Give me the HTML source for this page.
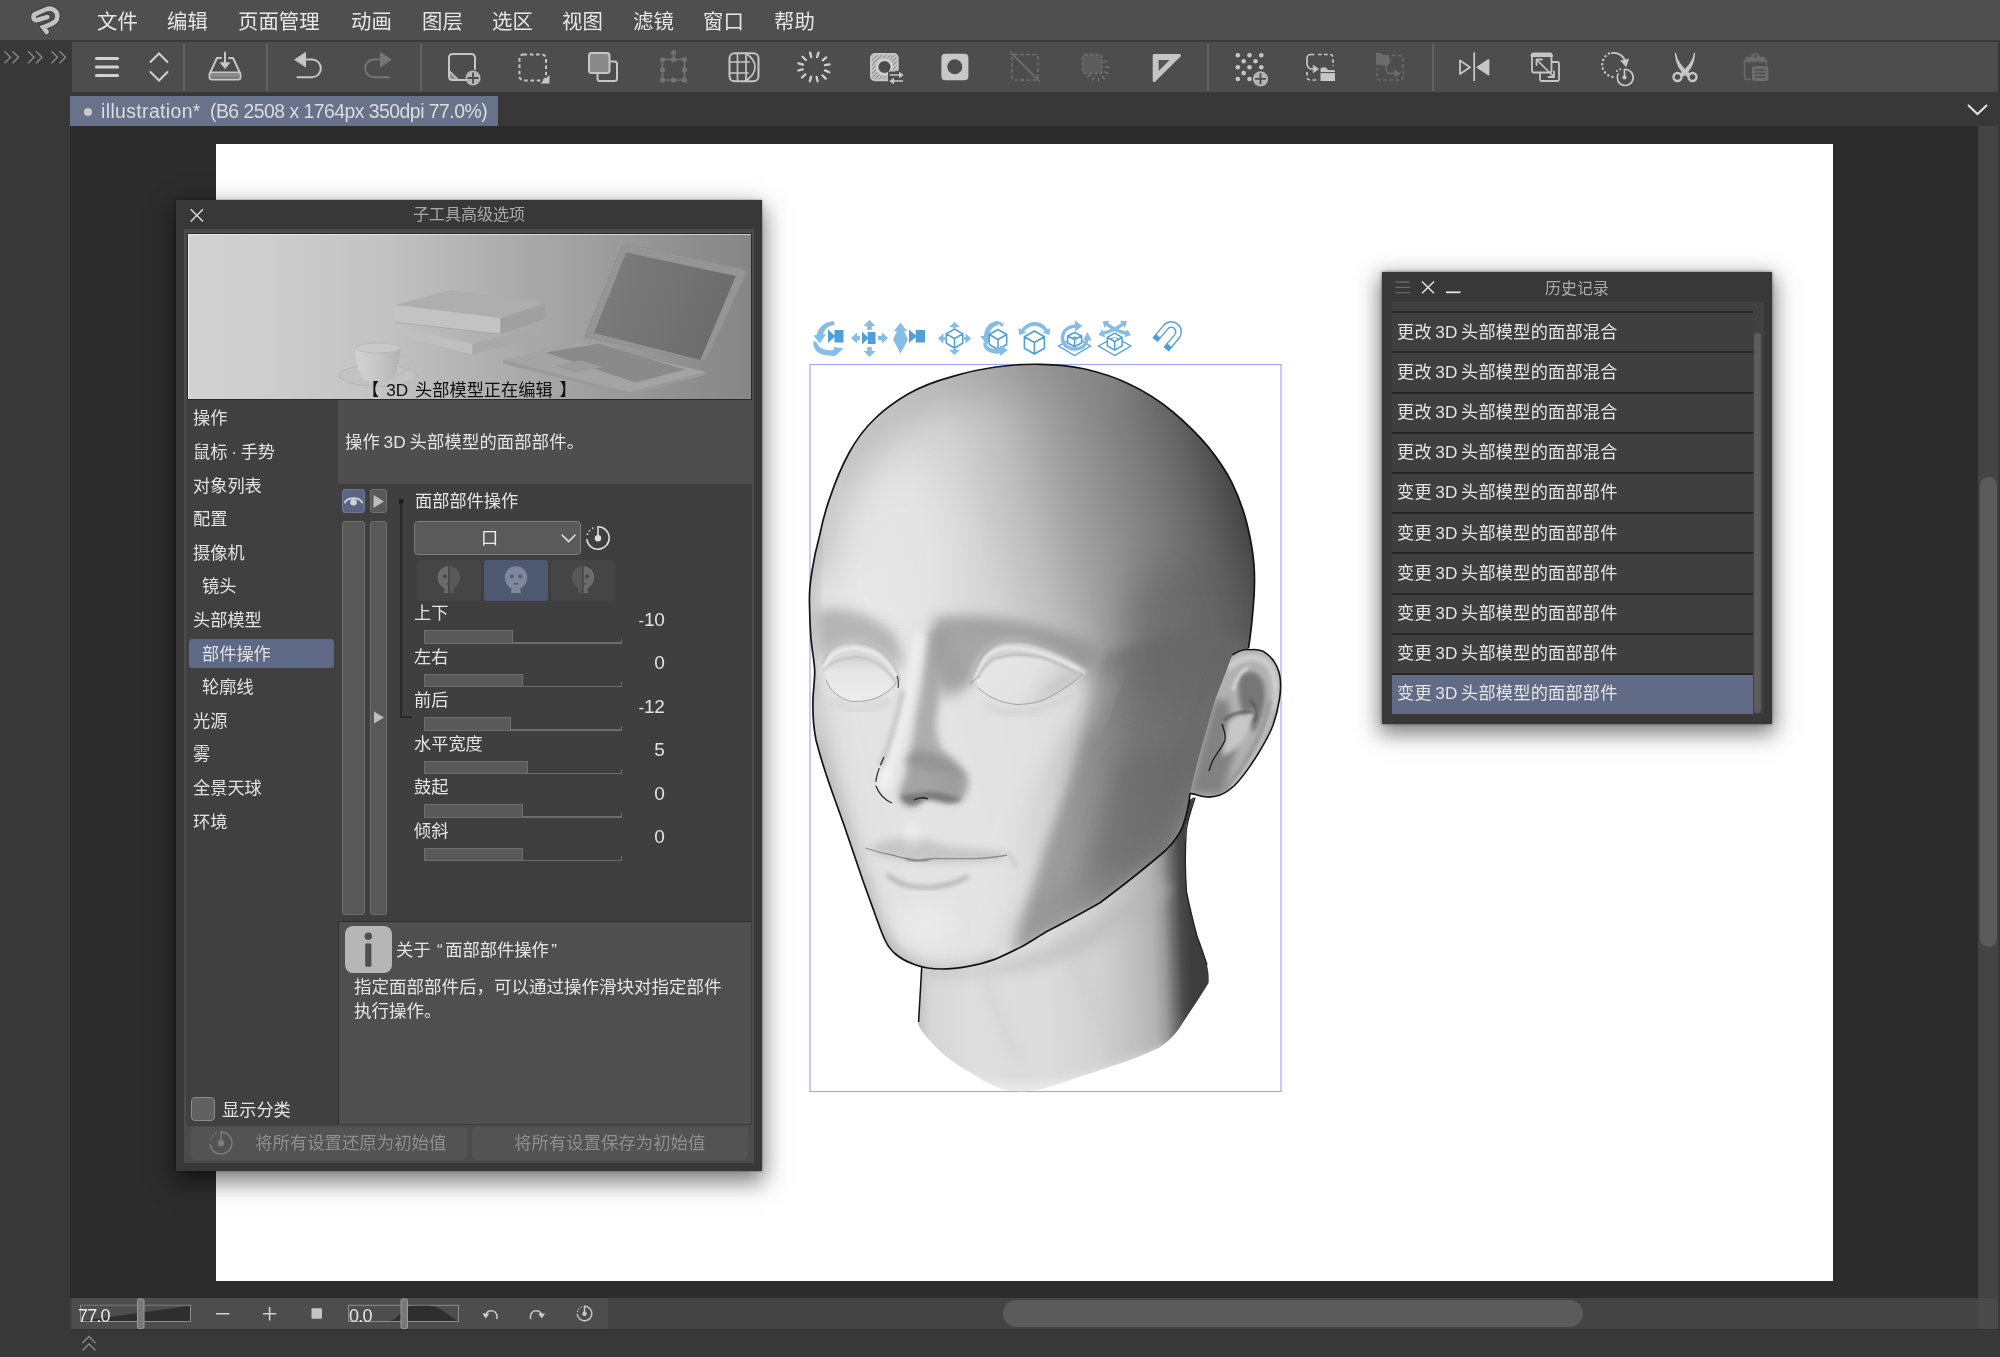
<!DOCTYPE html>
<html lang="zh-CN"><head><meta charset="utf-8"><title>illustration</title>
<style>
html,body{margin:0;padding:0;}
body{width:2000px;height:1357px;overflow:hidden;background:#383838;position:relative;
 font-family:"Liberation Sans","Noto Sans CJK SC",sans-serif;color:#e0e0e0;-webkit-font-smoothing:antialiased;}
.abs{position:absolute;}
div,span,svg{box-sizing:border-box;}
.t{position:absolute;white-space:nowrap;line-height:1;will-change:transform;}
.mi{will-change:transform;}
#menubar{position:absolute;left:0;top:0;width:2000px;height:40px;background:#4f4f4f;}
#menuline{position:absolute;left:0;top:40px;width:2000px;height:2px;background:#3a3a3a;}
.mi{position:absolute;top:11px;font-size:20.4px;line-height:22px;color:#e6e6e6;font-weight:400;white-space:nowrap;}
#leftcol{position:absolute;left:0;top:42px;width:70px;height:1315px;background:#383838;}
#toolbar{position:absolute;left:72px;top:42px;width:1926.300px;height:50px;background:#4d4d4d;}
.tsep{position:absolute;top:44px;width:2px;height:47px;background:#636363;}
#tabrow{position:absolute;left:70px;top:92px;width:1930px;height:34px;background:#383838;}
#tab{position:absolute;left:70px;top:95.600px;width:428.400px;height:30px;background:#68728b;}
#cv{position:absolute;left:70px;top:126px;width:1908px;height:1172px;background:#2c2c2c;}
#paper{position:absolute;left:216px;top:144px;width:1616.800px;height:1136.800px;background:#fff;}
#vsb{position:absolute;left:1978px;top:126px;width:20.300px;height:1172px;background:#444;}
#vth{position:absolute;left:1979.800px;top:476.700px;width:17.100px;height:470px;background:#5b5b5b;border-radius:8.500px;}
#bbar{position:absolute;left:70px;top:1298px;width:1928.300px;height:30.600px;background:#444;}
#bctl{position:absolute;left:72px;top:1298px;width:536px;height:31px;background:#4d4d4d;}
#hth{position:absolute;left:1003.200px;top:1299.800px;width:579.800px;height:27.200px;background:#5b5b5b;border-radius:13.600px;}
#bline{position:absolute;left:70px;top:1328.600px;width:1928.300px;height:1.500px;background:#2f2f2f;}

</style></head>
<body>
<div id="menubar"></div><div id="menuline"></div>
<span class="mi" style="left:96.5px">文件</span>
<span class="mi" style="left:167px">编辑</span>
<span class="mi" style="left:238px">页面管理</span>
<span class="mi" style="left:351px">动画</span>
<span class="mi" style="left:421.5px">图层</span>
<span class="mi" style="left:492px">选区</span>
<span class="mi" style="left:562px">视图</span>
<span class="mi" style="left:632.5px">滤镜</span>
<span class="mi" style="left:703px">窗口</span>
<span class="mi" style="left:774px">帮助</span>
<div id="leftcol"></div>
<div id="toolbar"></div>
<div class="tsep" style="left:183px"></div>
<div class="tsep" style="left:266px"></div>
<div class="tsep" style="left:420px"></div>
<div class="tsep" style="left:1207px"></div>
<div class="tsep" style="left:1432px"></div>
<div id="tabrow"></div>
<div id="tab"></div>
<span class="t" style="left:101.300px;top:102px;font-size:19.400px;color:#dcdcdc;letter-spacing:0.380px">illustration*</span><span class="t" style="left:209.500px;top:102px;font-size:19.400px;color:#dcdcdc;letter-spacing:-0.520px">(B6 2508 x 1764px 350dpi 77.0%)</span>
<div id="cv"></div>
<div id="paper"></div>
<div id="vsb"></div><div id="vth"></div>
<div id="bbar"></div><div id="corner" class="abs" style="left:1978px;top:1298px;width:20.300px;height:30.600px;background:#4a4a4a"></div><div id="bctl"></div><div id="hth"></div><div id="bline"></div>
<svg class="abs" style="left:20px;top:0" width="60" height="40" viewBox="20 0 60 40" fill="none" stroke-linecap="round" stroke-linejoin="miter">
<path id="lg" d="M47.400 17 L37.500 20 C33.500 21.100 31.800 15.800 35.600 13.900 L45.500 9.500 C52 6.600 59.300 11.500 56.900 18.800 C55.700 23 50 24.800 43.100 27.200 L46.700 32" stroke="#3b3b3b" stroke-width="6.400"/>
<path d="M47.400 17 L37.500 20 C33.500 21.100 31.800 15.800 35.600 13.900 L45.500 9.500 C52 6.600 59.300 11.500 56.900 18.800 C55.700 23 50 24.800 43.100 27.200 L46.700 32" stroke="#c2c2c2" stroke-width="4.600"/>
</svg>
<svg class="abs" style="left:80px;top:103.500px" width="16" height="16"><circle cx="8" cy="8" r="4" fill="#c8c8c8"/></svg>
<svg class="abs" style="left:0;top:42px" width="2000" height="52" viewBox="0 42 2000 52" fill="none" stroke="#c6c6c6" stroke-width="2" stroke-linecap="round" stroke-linejoin="round">
<!-- left chevrons -->
<g stroke="#8a8a8a" stroke-width="1.4" stroke-linecap="butt" stroke-linejoin="miter" transform="translate(0,0.7)">
<path d="M4.5 50.5 L10.5 56.5 L4.5 62.5 M12.5 50.5 L18.5 56.5 L12.5 62.5"/>
<path d="M28 50.5 L34 56.5 L28 62.5 M36 50.5 L42 56.5 L36 62.5"/>
<path d="M51.5 50.5 L57.5 56.5 L51.5 62.5 M59.5 50.5 L65.5 56.5 L59.5 62.5"/>
</g>
<!-- hamburger -->
<g stroke-width="3.2" stroke="#d2d2d2"><path d="M96.5 58.5H117.5M96.5 67H117.5M96.5 75.5H117.5"/></g>
<!-- updown -->
<path d="M150.5 62 L159 53.5 L167.5 62 M150.5 72 L159 80.5 L167.5 72" stroke="#d2d2d2" stroke-linejoin="miter"/>
<!-- save -->
<g>
<path d="M217 58 H221 M229 58 H233 L240 73 M217 58 L210 73"/>
<rect x="209.5" y="72.5" width="31" height="7" rx="2.5"/>
<rect x="211" y="74" width="28" height="3.6" fill="#8c8c8c" stroke="none"/>
<path d="M225 52.5V65" />
<path d="M220.5 63 L225 68.5 L229.500 63Z" fill="#c6c6c6" stroke-width="1"/>
</g>
<!-- undo -->
<g>
<path d="M305 59.500 H312 A8.800 8.800 0 0 1 312 77.200 H297.500"/>
<path d="M295 59.500 L305.500 52.500 V66.500Z" fill="#c6c6c6" stroke-width="1"/>
</g>
<!-- redo (disabled) -->
<g stroke="#767676">
<path d="M381 59.500 H374 A8.800 8.800 0 0 0 374 77.200 H389.500"/>
<path d="M391 59.500 L380.500 52.500 V66.500Z" fill="#767676" stroke-width="1"/>
</g>
<!-- new layer -->
<g>
<path d="M466 80 H452.500 A3.500 3.500 0 0 1 449 76.500 V57.500 A3.500 3.500 0 0 1 452.500 54 H471.500 A3.500 3.500 0 0 1 475 57.500 V69"/>
<path d="M449.500 71 L458 79.500 H449.500Z" fill="#8c8c8c" stroke-width="1.4"/>
<circle cx="473" cy="78" r="7.600" fill="#b4b4b4" stroke="none"/>
<path d="M473 73.200V82.800M468.200 78H477.800" stroke="#4d4d4d" stroke-width="1.800"/>
</g>
<!-- select rect -->
<g>
<rect x="519.500" y="54.500" width="26.500" height="26" rx="4" stroke-dasharray="3.600 2.700" stroke-linecap="butt"/>
<path d="M549.500 75 V83.500 H540.500Z" fill="#c6c6c6" stroke="none"/>
</g>
<!-- layers -->
<g>
<rect x="597.500" y="61.500" width="19.500" height="19.500" rx="2.500"/>
<rect x="589" y="53" width="20.500" height="20" rx="2.500" fill="#8a8a8a"/>
</g>
<!-- transform (disabled) -->
<g stroke="#737373" fill="#737373" stroke-width="1.600">
<rect x="662.500" y="59.500" width="22" height="20.500" fill="none"/>
<path d="M673.500 59.500V52.500" />
<circle cx="673.500" cy="52.500" r="1.800"/><circle cx="662.500" cy="59.500" r="1.800"/><circle cx="673.500" cy="59.500" r="1.800"/><circle cx="684.500" cy="59.500" r="1.800"/>
<circle cx="662.500" cy="69.700" r="1.800"/><circle cx="684.500" cy="69.700" r="1.800"/>
<circle cx="662.500" cy="80" r="1.800"/><circle cx="673.500" cy="80" r="1.800"/><circle cx="684.500" cy="80" r="1.800"/>
</g>
<!-- mesh grid -->
<g stroke-width="1.700">
<rect x="729.500" y="53.200" width="29" height="28" rx="5" stroke-width="2"/>
<path d="M737.500 53.500V81M729.500 62H749M729.500 73H748M746 53.500V81"/>
<path d="M746 53.500 C753 58 755 62 755 67 C755 72 752 77 745 81"/>
</g>
<!-- spinner -->
<g stroke-width="2.300" stroke="#cfcfcf">
<path d="M818.500 52.700L817.100 57.100M826.200 57.400L822.700 60.300M829.600 64.400L825 65.200M829.300 72.200L825 70.400M825.700 78.600L822.400 75.300M817.600 81.300L816.600 76.800M809.800 81.200L811.100 76.800M802 77.500L805.400 74.400M798.300 70.500L802.800 69.300M798.500 63.300L803 64.600M802.600 56.700L805.900 60M810.100 52.600L811.200 57.100"/>
</g>
<!-- mask -->
<g>
<defs><pattern id="hat" width="3" height="3" patternUnits="userSpaceOnUse" patternTransform="rotate(45)"><rect width="1.500" height="3" fill="#c6c6c6"/></pattern></defs>
<path d="M888 80.300 H875 A4 4 0 0 1 871 76.300 V58 A4 4 0 0 1 875 54 H893.700 A4 4 0 0 1 897.700 58 V70" fill="url(#hat)"/>
<circle cx="884.500" cy="67" r="7.400" fill="#4d4d4d" stroke="#d0d0d0" stroke-width="2.600"/>
<rect x="888" y="71.500" width="16" height="13" fill="#4d4d4d" stroke="none"/>
<path d="M890.500 75H901M892 81H902.500" stroke-width="1.600"/>
<path d="M899 71.700 L903.800 75 L899 78.300Z M894 77.700 L889.200 81 L894 84.300Z" fill="#c6c6c6" stroke="none"/>
</g>
<!-- record -->
<g>
<rect x="941.400" y="53.700" width="27" height="26.600" rx="4" fill="#c8c8c8" stroke="none"/>
<circle cx="954.800" cy="66.700" r="7.500" fill="#4d4d4d" stroke="none"/>
</g>
<!-- deselect (disabled) -->
<g stroke="#737373" stroke-width="1.500">
<rect x="1012" y="54.500" width="26" height="25.500" rx="2" stroke-dasharray="3.600 2.500" stroke-linecap="butt"/>
<path d="M1010.500 52.500 L1039.500 81"/>
</g>
<!-- shrink sel (disabled) -->
<g stroke="#737373" stroke-width="1.500">
<rect x="1082.500" y="54.500" width="19.500" height="19" rx="2" stroke-dasharray="3.200 2.300" stroke-linecap="butt" fill="#5c5c5c"/>
<path d="M1104 62.500L1107 60.500M1105.500 67H1109M1105 72L1108 73.500M1102 76.500L1104.500 79M1098.500 78V81M1094 77L1092.500 80M1090 75L1087.500 77"/>
</g>
<!-- triangle ruler -->
<g>
<path d="M1154.200 55.500 H1179.500 L1154.200 80.500Z" stroke="#c6c6c6" stroke-width="3" fill="#c6c6c6" stroke-linejoin="round"/>
<path d="M1158.600 60 H1169.600 L1158.600 71Z" fill="#555" stroke="none"/>
</g>
<!-- dots + plus -->
<g fill="#c6c6c6" stroke="none">
<circle cx="1237.800" cy="55.300" r="2.300"/><circle cx="1249.500" cy="55.300" r="2.300"/><circle cx="1261.300" cy="55.300" r="2.300"/>
<circle cx="1243.700" cy="61.300" r="2.300"/><circle cx="1255.500" cy="61.300" r="2.300"/>
<circle cx="1237.800" cy="67.200" r="2.300"/><circle cx="1249.500" cy="67.200" r="2.300"/><circle cx="1261.300" cy="67.200" r="2.300"/>
<circle cx="1243.700" cy="73.100" r="2.300"/>
<circle cx="1237.800" cy="79" r="2.300"/><circle cx="1249.500" cy="79" r="2.300"/>
<circle cx="1260.500" cy="78.800" r="7.600" fill="#b4b4b4"/>
<path d="M1260.500 74V83.600M1255.700 78.800H1265.300" stroke="#4d4d4d" stroke-width="1.800"/>
</g>
<!-- sel to folder -->
<g stroke-width="1.700">
<path d="M1318 54.500 H1330 A3 3 0 0 1 1333 57.500 V66" stroke-dasharray="3.600 2.500" stroke-linecap="butt"/>
<path d="M1307 72 V77 A3 3 0 0 0 1310 80 H1317" stroke-dasharray="3.600 2.500" stroke-linecap="butt"/>
<path d="M1313.500 54.500 H1311 A4 4 0 0 0 1307 58.500 V64 A5 5 0 0 0 1312 69 H1314"/>
<path d="M1313.500 65.500 L1318.500 69 L1313.500 72.500Z" fill="#c6c6c6" stroke-width="0.800"/>
<path d="M1320.500 81 V69 A1.500 1.500 0 0 1 1322 67.500 H1326 L1328 70 H1333.500 A1.500 1.500 0 0 1 1335 71.500 V81Z" fill="#c6c6c6" stroke="none"/>
<path d="M1321 72.600H1335" stroke="#4d4d4d" stroke-width="1"/>
</g>
<!-- folder to sel (disabled) -->
<g stroke="#6c6c6c" stroke-width="1.600">
<path d="M1392 55.500 H1400 A3 3 0 0 1 1403 58.500 V77 A3 3 0 0 1 1400 80 H1380 A3 3 0 0 1 1377 77 V68" stroke-dasharray="3.600 2.500" stroke-linecap="butt"/>
<path d="M1376 64.500 V53 H1381 L1383 55 H1389 V58.500 H1391.500 L1388 66Z" fill="#6c6c6c" stroke="none"/>
<path d="M1386 67 V69 A4.500 4.500 0 0 0 1390.500 73.500 H1396"/>
<path d="M1395 70 L1400 73.500 L1395 77Z" fill="#6c6c6c" stroke-width="0.800"/>
</g>
<!-- flip -->
<g stroke-width="1.800">
<path d="M1474.200 52.500V81" stroke-linecap="butt"/>
<path d="M1460 60.500 L1470 67.200 L1460 74Z" stroke-linejoin="round"/>
<path d="M1488.500 60 L1477.500 67.200 L1488.500 74.500Z" fill="#c6c6c6"/>
</g>
<!-- resize -->
<g stroke-width="1.800">
<rect x="1540" y="62" width="19" height="19" rx="1.500"/>
<rect x="1532" y="53.500" width="19.500" height="19" rx="1.500" fill="#4d4d4d"/>
<path d="M1532 55.500H1551.500" stroke-width="3"/>
<path d="M1537.500 60.500 L1553 76" stroke-width="1.600"/>
<path d="M1536.500 59.500 H1542 M1536.500 59.500 V65 M1554 77 H1548.500 M1554 77 V71.500" stroke-width="1.800"/>
</g>
<!-- rotate dotted -->
<g>
<path d="M1612 53 A12 12 0 0 1 1625.500 62.500" stroke-width="1.800"/>
<path d="M1621 61 L1626 66.500 L1628.500 59.500Z" fill="#c6c6c6" stroke-width="0.800"/>
<path d="M1609 53.500 A12.500 12.500 0 0 0 1613 77" stroke-dasharray="0.100 4.300" stroke-width="2.400"/>
<path d="M1617 71 L1621 69" stroke-dasharray="0.100 3.500" stroke-width="2"/>
<path d="M1618 74 A8 8 0 1 0 1624.500 69.500" stroke-width="1.700"/>
<path d="M1624.500 69.500V76" stroke-width="1.700"/>
<circle cx="1624.500" cy="77.500" r="2.100" fill="#c6c6c6" stroke="none"/>
</g>
<!-- scissors -->
<g>
<path d="M1675.500 53.500 C1676.500 60 1681 67 1690 74.500 L1687 76 C1679 70 1676 62 1675.500 53.500Z" fill="#c6c6c6" stroke-width="1.400"/>
<path d="M1694.500 53.500 C1693.500 60 1689 67 1680 74.500 L1683 76 C1691 70 1694 62 1694.500 53.500Z" fill="#c6c6c6" stroke-width="1.400"/>
<circle cx="1677.500" cy="77" r="4" stroke-width="2.400"/>
<circle cx="1692.500" cy="77" r="4" stroke-width="2.400"/>
</g>
<!-- paste (disabled) -->
<g stroke="#6c6c6c" stroke-width="1.500">
<path d="M1750 79.500 H1746.500 A2 2 0 0 1 1744.500 77.500 V60.500"/>
<path d="M1746 61.500 V57.500 H1751.500 A4 4 0 0 1 1759.500 57.500 H1765 V61.500Z" fill="#6c6c6c" stroke-width="1"/>
<circle cx="1755.500" cy="56" r="1.500" fill="#4d4d4d" stroke="none"/>
<path d="M1766.500 60V65"/>
<rect x="1752" y="66" width="16.500" height="15" rx="2.500" fill="#6c6c6c" stroke="none"/>
<path d="M1755.500 70H1765M1755.500 73.500H1765M1755.500 77H1765" stroke="#4d4d4d" stroke-width="1.500"/>
</g>
<!-- tab dot + dropdown chevron -->
</svg>
<svg class="abs" style="left:1960px;top:96px" width="36" height="28" viewBox="1960 96 36 28" fill="none" stroke="#e4e4e4" stroke-width="2"><path d="M1968 105 L1977.500 114 L1987 105"/></svg>
<div id="sp" class="abs" style="left:176px;top:199.5px;width:586px;height:971px;background:#383838;box-shadow:0 9px 22px 2px rgba(0,0,0,0.52), 0 0 2px rgba(0,0,0,0.5);"></div>
<svg class="abs" style="left:186px;top:205px" width="22" height="22" viewBox="186 205 22 22" stroke="#d8d8d8" stroke-width="1.5" fill="none"><path d="M190.700 209.200 L203 221.500 M203 209.200 L190.700 221.500"/></svg>
<span class="t" style="left:412.500px;top:207px;font-size:16px;color:#a9a9a9;">子工具高级选项</span>
<div class="abs" style="left:184px;top:229px;width:570px;height:933.500px;background:#4c4c4c;"></div>
<div class="abs" style="left:186.500px;top:233px;width:565.500px;height:167px;background:#2a2a2a;"></div>
<div id="pv" class="abs" style="left:187.500px;top:234px;width:563.500px;height:165px;background:linear-gradient(90deg,#d2d2d2 0%,#cdcdcd 15%,#c2c2c2 35%,#aeaeae 55%,#9c9c9c 75%,#8c8c8c 92%,#868686 100%);overflow:hidden;box-shadow:inset 1px 1px 0 rgba(255,255,255,0.55);"></div>
<div class="abs" style="left:186px;top:400px;width:151.500px;height:725.500px;background:#404040;"></div>
<div class="abs" style="left:337.500px;top:400px;width:414px;height:84px;background:#4e4e4e;"></div>
<span class="t" style="left:345px;top:434px;font-size:17.300px;color:#e4e4e4;word-spacing:-1.500px;letter-spacing:0.200px;">操作 3D 头部模型的面部部件。</span>
<div class="abs" style="left:337.500px;top:484px;width:414px;height:437px;background:#3f3f3f;"></div>
<div class="abs" style="left:337.500px;top:920.500px;width:414.500px;height:204px;background:#4f4f4f;border:1.500px solid #2d2d2d;border-bottom-color:#3c3c3c;border-right-color:#3c3c3c;"></div>
<span class="t" style="left:193.0px;top:410.3px;font-size:17.200px;color:#e2e2e2;">操作</span>
<span class="t" style="left:193.0px;top:443.9px;font-size:17.200px;color:#e2e2e2;">鼠标<span style="letter-spacing:0;margin:0 -1px">&nbsp;·&nbsp;</span>手势</span>
<span class="t" style="left:193.0px;top:477.5px;font-size:17.200px;color:#e2e2e2;">对象列表</span>
<span class="t" style="left:193.0px;top:511.1px;font-size:17.200px;color:#e2e2e2;">配置</span>
<span class="t" style="left:193.0px;top:544.7px;font-size:17.200px;color:#e2e2e2;">摄像机</span>
<span class="t" style="left:201.5px;top:578.3px;font-size:17.200px;color:#e2e2e2;">镜头</span>
<span class="t" style="left:193.0px;top:611.9px;font-size:17.200px;color:#e2e2e2;">头部模型</span>
<div class="abs" style="left:189px;top:638.5px;width:144.500px;height:29.500px;background:#5e6987;border-radius:3px;"></div>
<span class="t" style="left:201.5px;top:645.5px;font-size:17.200px;color:#e2e2e2;">部件操作</span>
<span class="t" style="left:201.5px;top:679.1px;font-size:17.200px;color:#e2e2e2;">轮廓线</span>
<span class="t" style="left:193.0px;top:712.7px;font-size:17.200px;color:#e2e2e2;">光源</span>
<span class="t" style="left:193.0px;top:746.3px;font-size:17.200px;color:#e2e2e2;">雾</span>
<span class="t" style="left:193.0px;top:779.9px;font-size:17.200px;color:#e2e2e2;">全景天球</span>
<span class="t" style="left:193.0px;top:813.5px;font-size:17.200px;color:#e2e2e2;">环境</span>
<div class="abs" style="left:342px;top:489px;width:23px;height:23.500px;background:#5b6583;border:1px solid #6f7890;border-radius:3px;"></div>
<svg class="abs" style="left:342px;top:489.500px" width="23" height="23" viewBox="0 0 23 23" fill="none"><path d="M2.800 12.500 C5.500 6.800 17.500 6.800 20.200 12.500" stroke="#d0d0d8" stroke-width="1.800" stroke-linecap="round"/><circle cx="11.500" cy="12.300" r="3.300" fill="#d0d0d8"/></svg>
<div class="abs" style="left:370px;top:489px;width:17px;height:23.500px;background:#595959;border:1px solid #707070;border-radius:3px;"></div>
<svg class="abs" style="left:370px;top:489.500px" width="17" height="23" viewBox="0 0 17 23"><path d="M3.500 5 L14 11.500 L3.500 18Z" fill="#bdbdbd"/></svg>
<div class="abs" style="left:342px;top:521px;width:23px;height:394px;background:#585858;border:1px solid #6e6e6e;border-radius:3px;"></div>
<div class="abs" style="left:370px;top:521px;width:17px;height:394px;background:#585858;border:1px solid #6e6e6e;border-radius:3px;"></div>
<svg class="abs" style="left:370px;top:706px" width="17" height="23" viewBox="0 0 17 23"><path d="M4 5.500 L14 11.500 L4 17.500Z" fill="#bdbdbd"/></svg>
<svg class="abs" style="left:396px;top:496px" width="16" height="226" viewBox="396 496 16 226" fill="none"><rect x="399" y="499" width="4.500" height="4.500" fill="#1c1c1c"/><path d="M401.200 503 V717.200 H412" stroke="#1c1c1c" stroke-width="1.300"/></svg>
<span class="t" style="left:414.500px;top:492.500px;font-size:17.200px;color:#e4e4e4;">面部部件操作</span>
<div class="abs" style="left:414px;top:521px;width:167px;height:33.500px;background:#5a5a5a;border:1px solid #7c7c7c;border-radius:4px;"></div>
<span class="t" style="left:481px;top:529.500px;font-size:17.200px;color:#ececec;">口</span>
<svg class="abs" style="left:558px;top:530px" width="22" height="16" viewBox="558 530 22 16" fill="none" stroke="#e0e0e0" stroke-width="1.600"><path d="M561.800 534.800 L568.600 541.600 L575.400 534.800"/></svg>
<svg class="abs" style="left:583.0px;top:522.7px" width="30" height="30" viewBox="583.0 522.7 30 30" fill="none" stroke="#dcdcdc" stroke-width="1.6" stroke-linecap="round"><path d="M598.0 526.5 A11.2 11.2 0 1 1 586.9 539.3"/><path d="M598.0 526.5 V537.7"/><circle cx="598.0" cy="538.0" r="3.2" fill="#dcdcdc" stroke="none"/><circle cx="592.7" cy="527.8" r="0.9" fill="#dcdcdc" stroke="none"/><circle cx="589.4" cy="530.5" r="0.9" fill="#dcdcdc" stroke="none"/><circle cx="587.5" cy="533.9" r="0.9" fill="#dcdcdc" stroke="none"/></svg>
<div class="abs" style="left:417px;top:559.800px;width:63.700px;height:41px;background:#454545;border-radius:3px;"></div>
<div class="abs" style="left:484.100px;top:559.800px;width:63.700px;height:41px;background:#4f5871;border-radius:3px;"></div>
<div class="abs" style="left:551.200px;top:559.800px;width:63.700px;height:41px;background:#454545;border-radius:3px;"></div>
<svg class="abs" style="left:433.8px;top:562px" width="30" height="36" viewBox="433.8 562 30 36"><clipPath id="clleft"><rect x="433.8" y="560" width="14" height="40"/></clipPath><clipPath id="crleft"><rect x="449.4" y="560" width="14" height="40"/></clipPath><path d="M448.8 566.300 C455.3 566.300 460.0 571 460.0 577.500 C460.0 582.500 457.3 586 453.0 588.800 L454.1 593 H443.5 L444.6 588.800 C440.3 586 437.6 582.500 437.6 577.500 C437.6 571 442.3 566.300 448.8 566.300Z" fill="#6c6c6c" clip-path="url(#clleft)"/><path d="M448.8 566.300 C455.3 566.300 460.0 571 460.0 577.500 C460.0 582.500 457.3 586 453.0 588.800 L454.1 593 H443.5 L444.6 588.800 C440.3 586 437.6 582.500 437.6 577.500 C437.6 571 442.3 566.300 448.8 566.300Z" fill="#585858" clip-path="url(#crleft)"/><circle cx="444.6" cy="576.300" r="1.900" fill="#454545"/><rect x="446.2" y="583" width="2" height="1.600" fill="#454545"/></svg>
<svg class="abs" style="left:501.0px;top:562px" width="30" height="36" viewBox="501.0 562 30 36"><path d="M516.0 566.300 C522.5 566.300 527.2 571 527.2 577.500 C527.2 582.500 524.5 586 520.2 588.800 L521.3 593 H510.7 L511.8 588.800 C507.5 586 504.8 582.500 504.8 577.500 C504.8 571 509.5 566.300 516.0 566.300Z" fill="#7f879c"/><circle cx="511.8" cy="576.300" r="1.900" fill="#4f5871"/><circle cx="520.2" cy="576.300" r="1.900" fill="#4f5871"/><rect x="513.8" y="583" width="4.400" height="1.600" fill="#4f5871"/></svg>
<svg class="abs" style="left:568.0px;top:562px" width="30" height="36" viewBox="568.0 562 30 36"><clipPath id="clright"><rect x="568.0" y="560" width="14" height="40"/></clipPath><clipPath id="crright"><rect x="583.6" y="560" width="14" height="40"/></clipPath><path d="M583.0 566.300 C589.5 566.300 594.2 571 594.2 577.500 C594.2 582.500 591.5 586 587.2 588.800 L588.3 593 H577.7 L578.8 588.800 C574.5 586 571.8 582.500 571.8 577.500 C571.8 571 576.5 566.300 583.0 566.300Z" fill="#585858" clip-path="url(#clright)"/><path d="M583.0 566.300 C589.5 566.300 594.2 571 594.2 577.500 C594.2 582.500 591.5 586 587.2 588.800 L588.3 593 H577.7 L578.8 588.800 C574.5 586 571.8 582.500 571.8 577.500 C571.8 571 576.5 566.300 583.0 566.300Z" fill="#6c6c6c" clip-path="url(#crright)"/><circle cx="587.2" cy="576.300" r="1.900" fill="#454545"/><rect x="583.6" y="583" width="2" height="1.600" fill="#454545"/></svg>
<span class="t" style="left:413.500px;top:605.3px;font-size:17.200px;color:#e4e4e4;">上下</span>
<span class="t" style="left:600px;width:64.500px;text-align:right;top:609.7px;font-size:19px;color:#e4e4e4;letter-spacing:-0.300px"><span style="font-size:17px;position:relative;top:-0.5px">-</span>10</span>
<div class="abs" style="left:424px;top:642.2px;width:198px;height:1.500px;background:#6c6c6c;"></div>
<div class="abs" style="left:620.700px;top:638.5px;width:1.300px;height:5px;background:#6c6c6c;"></div>
<div class="abs" style="left:423.700px;top:630.0px;width:88.9px;height:13.700px;background:#595959;border:1px solid #6e6e6e;"></div>
<span class="t" style="left:413.500px;top:648.8px;font-size:17.200px;color:#e4e4e4;">左右</span>
<span class="t" style="left:600px;width:64.500px;text-align:right;top:653.2px;font-size:19px;color:#e4e4e4;letter-spacing:-0.300px">0</span>
<div class="abs" style="left:424px;top:685.7px;width:198px;height:1.500px;background:#6c6c6c;"></div>
<div class="abs" style="left:620.700px;top:682.0px;width:1.300px;height:5px;background:#6c6c6c;"></div>
<div class="abs" style="left:423.700px;top:673.5px;width:99.5px;height:13.700px;background:#595959;border:1px solid #6e6e6e;"></div>
<span class="t" style="left:413.500px;top:692.3px;font-size:17.200px;color:#e4e4e4;">前后</span>
<span class="t" style="left:600px;width:64.500px;text-align:right;top:696.7px;font-size:19px;color:#e4e4e4;letter-spacing:-0.300px"><span style="font-size:17px;position:relative;top:-0.5px">-</span>12</span>
<div class="abs" style="left:424px;top:729.2px;width:198px;height:1.500px;background:#6c6c6c;"></div>
<div class="abs" style="left:620.700px;top:725.5px;width:1.300px;height:5px;background:#6c6c6c;"></div>
<div class="abs" style="left:423.700px;top:717.0px;width:86.9px;height:13.700px;background:#595959;border:1px solid #6e6e6e;"></div>
<span class="t" style="left:413.500px;top:735.8px;font-size:17.200px;color:#e4e4e4;">水平宽度</span>
<span class="t" style="left:600px;width:64.500px;text-align:right;top:740.2px;font-size:19px;color:#e4e4e4;letter-spacing:-0.300px">5</span>
<div class="abs" style="left:424px;top:772.7px;width:198px;height:1.500px;background:#6c6c6c;"></div>
<div class="abs" style="left:620.700px;top:769.0px;width:1.300px;height:5px;background:#6c6c6c;"></div>
<div class="abs" style="left:423.700px;top:760.5px;width:104.7px;height:13.700px;background:#595959;border:1px solid #6e6e6e;"></div>
<span class="t" style="left:413.500px;top:779.3px;font-size:17.200px;color:#e4e4e4;">鼓起</span>
<span class="t" style="left:600px;width:64.500px;text-align:right;top:783.7px;font-size:19px;color:#e4e4e4;letter-spacing:-0.300px">0</span>
<div class="abs" style="left:424px;top:816.2px;width:198px;height:1.500px;background:#6c6c6c;"></div>
<div class="abs" style="left:620.700px;top:812.5px;width:1.300px;height:5px;background:#6c6c6c;"></div>
<div class="abs" style="left:423.700px;top:804.0px;width:99.5px;height:13.700px;background:#595959;border:1px solid #6e6e6e;"></div>
<span class="t" style="left:413.500px;top:822.8px;font-size:17.200px;color:#e4e4e4;">倾斜</span>
<span class="t" style="left:600px;width:64.500px;text-align:right;top:827.2px;font-size:19px;color:#e4e4e4;letter-spacing:-0.300px">0</span>
<div class="abs" style="left:424px;top:859.7px;width:198px;height:1.500px;background:#6c6c6c;"></div>
<div class="abs" style="left:620.700px;top:856.0px;width:1.300px;height:5px;background:#6c6c6c;"></div>
<div class="abs" style="left:423.700px;top:847.5px;width:99.5px;height:13.700px;background:#595959;border:1px solid #6e6e6e;"></div>
<div class="abs" style="left:345px;top:926.400px;width:46.500px;height:46.600px;background:#b6b6b6;border-radius:8px;"></div>
<svg class="abs" style="left:345px;top:926.400px" width="47" height="47" viewBox="0 0 47 47"><circle cx="23.300" cy="10.300" r="3.700" fill="#4f4f4f"/><rect x="20.200" y="17.500" width="6.200" height="23.200" rx="1.200" fill="#4f4f4f"/></svg>
<span class="t" style="left:396px;top:942px;font-size:17.300px;color:#e4e4e4;">关于 <span style="margin:0 2.500px 0 1.500px">“</span>面部部件操作<span style="margin-left:2.500px">”</span></span>
<span class="t" style="left:354px;top:978.500px;font-size:17.500px;color:#e4e4e4;">指定面部部件后，可以通过操作滑块对指定部件</span>
<span class="t" style="left:354px;top:1002.500px;font-size:17.500px;color:#e4e4e4;">执行操作。</span>
<div class="abs" style="left:191px;top:1097px;width:23.500px;height:24px;background:#616161;border:1.500px solid #8b8b8b;border-radius:4px;"></div>
<span class="t" style="left:221.800px;top:1102px;font-size:17.200px;color:#e4e4e4;">显示分类</span>
<div class="abs" style="left:190.500px;top:1126.500px;width:276px;height:33px;background:#535353;border-radius:4px;"></div>
<div class="abs" style="left:472px;top:1126.500px;width:276px;height:33px;background:#535353;border-radius:4px;"></div>
<svg class="abs" style="left:206.0px;top:1127.7px" width="30" height="30" viewBox="206.0 1127.7 30 30" fill="none" stroke="#7c7c7c" stroke-width="1.4" stroke-linecap="round"><path d="M221.0 1131.7 A11.0 11.0 0 1 1 210.1 1144.2"/><path d="M221.0 1131.7 V1142.7"/><circle cx="221.0" cy="1143.0" r="3.2" fill="#7c7c7c" stroke="none"/><circle cx="215.8" cy="1133.0" r="0.9" fill="#7c7c7c" stroke="none"/><circle cx="212.6" cy="1135.6" r="0.9" fill="#7c7c7c" stroke="none"/><circle cx="210.7" cy="1138.9" r="0.9" fill="#7c7c7c" stroke="none"/></svg>
<span class="t" style="left:254.500px;top:1135.400px;font-size:17.400px;color:#8f8f8f;">将所有设置还原为初始值</span>
<span class="t" style="left:513.500px;top:1135.400px;font-size:17.400px;color:#8f8f8f;">将所有设置保存为初始值</span>
<svg class="abs" style="left:187.500px;top:234px" width="563.500" height="165" viewBox="187.500 234 563.500 165" fill="none">
<defs><linearGradient id="gscr" x1="0" y1="0" x2="1" y2="0.300"><stop offset="0" stop-color="#7e7e7e"/><stop offset="1" stop-color="#6c6c6c"/></linearGradient>
<linearGradient id="gcup" x1="0" y1="0" x2="1" y2="0"><stop offset="0" stop-color="#d2d2d2"/><stop offset="0.500" stop-color="#c6c6c6"/><stop offset="1" stop-color="#b2b2b2"/></linearGradient></defs>
<!-- books -->
<path d="M393.400 326.600 L471.900 343.800 L471.900 354.600 L393.400 335.200Z" fill="#bfbfbf"/>
<path d="M471.900 343.800 L539.600 326.600 L539.600 337.400 L471.900 354.600Z" fill="#a9a9a9"/>
<path d="M394.500 305 L450.400 290 L545 303 L499.900 318Z" fill="#aeaeae"/>
<path d="M394.500 305 L499.900 318 L499.900 334 L394.500 322.300Z" fill="#c3c3c3"/>
<path d="M499.900 318 L545 303 L545 318 L499.900 334Z" fill="#a0a0a0"/>
<path d="M394.500 322.300 L499.900 334 L545 318" stroke="#9c9c9c" stroke-width="0.800" opacity="0.700"/>
<!-- cup -->
<ellipse cx="377.300" cy="375.500" rx="38.700" ry="10.700" fill="#c2c2c2" stroke="#b0b0b0" stroke-width="0.800"/>
<path d="M399 356 C408 352 414 358 409 366 C405 372 398 376 392 377" stroke="#bcbcbc" stroke-width="3"/>
<path d="M354.700 348 C354.700 362 358 374 364 380 C370 384 384 384 390 380 C396 374 399.900 362 399.900 348Z" fill="url(#gcup)"/>
<ellipse cx="377.300" cy="348" rx="22.600" ry="5" fill="#c9c9c9" stroke="#b4b4b4" stroke-width="0.800"/>
<!-- laptop -->
<path d="M503 360 L579.400 341.700 L704 371.800 L704 375 L628.900 395.500 L503 363.500Z" fill="#9a9a9a"/>
<path d="M503 360 L579.400 341.700 L704 371.800 L628.900 392.200Z" fill="#a4a4a4"/>
<path d="M545 352.400 L598.800 343.800 L684.800 369.600 L635.300 382.500Z" fill="#8a8a8a"/>
<path d="M553.600 365.300 L580 360.500 L602 367 L574 372.500Z" fill="#9c9c9c"/>
<path d="M627 243.800 L741 268.500 Q746.500 270.500 745 275 L705.200 361 L583.700 337.400 L621 247 Q623 243 627 243.800Z" fill="#959595" stroke="#8a8a8a" stroke-width="0.800" stroke-dasharray="3 2"/>
<path d="M625.600 252.400 L735.300 276 L699.800 360 L593.400 333Z" fill="url(#gscr)"/>
</svg>
<span class="t" style="left:361.500px;top:382.300px;font-size:17.200px;color:#101010;word-spacing:2.200px;">【 3D 头部模型正在编辑 】</span>
<div class="abs" style="left:1382px;top:271.500px;width:390px;height:452px;background:#383838;box-shadow:0 7px 20px 3px rgba(0,0,0,0.5),0 0 3px rgba(0,0,0,0.5);"></div>
<svg class="abs" style="left:1390px;top:276px" width="80" height="22" viewBox="1390 276 80 22" fill="none"><path d="M1395.500 282H1410M1395.500 287.300H1410M1395.500 292.600H1410" stroke="#686868" stroke-width="1.300"/><path d="M1422 281.500L1434 293.300M1434 281.500L1422 293.300" stroke="#e2e2e2" stroke-width="1.500"/><path d="M1446 292.300H1460.500" stroke="#e2e2e2" stroke-width="1.800"/></svg>
<span class="t" style="left:1544.800px;top:280.500px;font-size:16px;color:#a9a9a9;">历史记录</span>
<div class="abs" style="left:1391.500px;top:302px;width:361px;height:412px;background:#3f3f3f;"></div>
<div class="abs" style="left:1752.500px;top:302px;width:11.500px;height:412px;background:#414141;"></div>
<div class="abs" style="left:1754px;top:332.500px;width:6.500px;height:380px;background:#5c5c5c;border-radius:3.200px;"></div>
<div class="abs" style="left:1391.500px;top:311.2px;width:361px;height:2px;background:#262626;"></div>
<span class="t" style="left:1397.200px;top:323.5px;font-size:17.200px;color:#e4e4e4;word-spacing:-1.500px;letter-spacing:0.200px;">更改 3D 头部模型的面部混合</span>
<div class="abs" style="left:1391.500px;top:351.4px;width:361px;height:2px;background:#262626;"></div>
<span class="t" style="left:1397.200px;top:363.7px;font-size:17.200px;color:#e4e4e4;word-spacing:-1.500px;letter-spacing:0.200px;">更改 3D 头部模型的面部混合</span>
<div class="abs" style="left:1391.500px;top:391.6px;width:361px;height:2px;background:#262626;"></div>
<span class="t" style="left:1397.200px;top:403.9px;font-size:17.200px;color:#e4e4e4;word-spacing:-1.500px;letter-spacing:0.200px;">更改 3D 头部模型的面部混合</span>
<div class="abs" style="left:1391.500px;top:431.8px;width:361px;height:2px;background:#262626;"></div>
<span class="t" style="left:1397.200px;top:444.1px;font-size:17.200px;color:#e4e4e4;word-spacing:-1.500px;letter-spacing:0.200px;">更改 3D 头部模型的面部混合</span>
<div class="abs" style="left:1391.500px;top:472.0px;width:361px;height:2px;background:#262626;"></div>
<span class="t" style="left:1397.200px;top:484.3px;font-size:17.200px;color:#e4e4e4;word-spacing:-1.500px;letter-spacing:0.200px;">变更 3D 头部模型的面部部件</span>
<div class="abs" style="left:1391.500px;top:512.2px;width:361px;height:2px;background:#262626;"></div>
<span class="t" style="left:1397.200px;top:524.5px;font-size:17.200px;color:#e4e4e4;word-spacing:-1.500px;letter-spacing:0.200px;">变更 3D 头部模型的面部部件</span>
<div class="abs" style="left:1391.500px;top:552.4px;width:361px;height:2px;background:#262626;"></div>
<span class="t" style="left:1397.200px;top:564.7px;font-size:17.200px;color:#e4e4e4;word-spacing:-1.500px;letter-spacing:0.200px;">变更 3D 头部模型的面部部件</span>
<div class="abs" style="left:1391.500px;top:592.6px;width:361px;height:2px;background:#262626;"></div>
<span class="t" style="left:1397.200px;top:604.9px;font-size:17.200px;color:#e4e4e4;word-spacing:-1.500px;letter-spacing:0.200px;">变更 3D 头部模型的面部部件</span>
<div class="abs" style="left:1391.500px;top:632.8px;width:361px;height:2px;background:#262626;"></div>
<span class="t" style="left:1397.200px;top:645.1px;font-size:17.200px;color:#e4e4e4;word-spacing:-1.500px;letter-spacing:0.200px;">变更 3D 头部模型的面部部件</span>
<div class="abs" style="left:1391.500px;top:675px;width:361px;height:39px;background:#616b85;"></div>
<div class="abs" style="left:1391.500px;top:673.0px;width:361px;height:2px;background:#262626;"></div>
<span class="t" style="left:1397.200px;top:685.3px;font-size:17.200px;color:#e4e4e4;word-spacing:-1.500px;letter-spacing:0.200px;">变更 3D 头部模型的面部部件</span>
<svg class="abs" style="left:70px;top:1296px" width="560" height="61" viewBox="70 1296 560 61" fill="none">
<rect x="80.500" y="1305.300" width="110" height="16.200" fill="#2e2e2e" stroke="#8c8c8c" stroke-width="1"/>
<path d="M81 1305.800 H190 L81 1321Z" fill="#4e4e4e"/>
<rect x="137.500" y="1299" width="6.500" height="29.500" rx="1.500" fill="#787878" stroke="#9a9a9a" stroke-width="1"/>
<rect x="348.500" y="1305.300" width="110" height="16.200" fill="#4e4e4e" stroke="#8c8c8c" stroke-width="1"/>
<path d="M390 1321 C400 1319 402 1306 412 1305.800 H430 C440 1306 448 1316 458 1321Z" fill="#2e2e2e"/>
<rect x="401" y="1299" width="6.500" height="29.500" rx="1.500" fill="#787878" stroke="#9a9a9a" stroke-width="1"/>
<path d="M216 1313.700H229.500M263 1313.700H276.300M269.600 1307V1320.400" stroke="#d0d0d0" stroke-width="1.600"/>
<rect x="311.500" y="1308.200" width="10.500" height="10.500" rx="1" fill="#c4c4c4"/>
<g stroke="#cacaca" stroke-width="1.500"><path d="M485.500 1316 A5.800 5.800 0 1 1 496.500 1319"/><path d="M482.300 1313.500 L485.800 1318.500 L489.300 1313.500Z" fill="#cacaca" stroke="none"/>
<path d="M542 1316 A5.800 5.800 0 1 0 531 1319"/><path d="M545.200 1313.500 L541.700 1318.500 L538.200 1313.500Z" fill="#cacaca" stroke="none"/></g>
<g stroke="#cacaca" stroke-width="1.400" stroke-linecap="round"><path d="M584.5 1306.2 A7.3 7.3 0 1 1 577.3 1314.5"/><path d="M584.5 1306.2V1313.5"/><circle cx="584.5" cy="1313.8" r="2.200" fill="#cacaca" stroke="none"/>
<circle cx="581.1" cy="1307.1" r="0.700" fill="#cacaca" stroke="none"/>
<circle cx="578.7" cy="1309.0" r="0.700" fill="#cacaca" stroke="none"/>
<circle cx="577.5" cy="1311.5" r="0.700" fill="#cacaca" stroke="none"/>
</g>
<path d="M82.500 1343 L89 1336.500 L95.500 1343 M82.500 1350.500 L89 1344 L95.500 1350.500" stroke="#8c8c8c" stroke-width="1.300"/>
</svg>
<span class="t" style="left:77.500px;top:1307px;font-size:18px;color:#e8e8e8;letter-spacing:-0.800px">77.0</span>
<span class="t" style="left:349px;top:1307px;font-size:18px;color:#e8e8e8;letter-spacing:-0.800px">0.0</span>
<svg class="abs" style="left:795px;top:355px" width="500" height="745" viewBox="795 355 500 745" fill="none">
<defs>
<filter id="b1" x="-20%" y="-20%" width="140%" height="140%"><feGaussianBlur stdDeviation="1"/></filter>
<filter id="b2" x="-20%" y="-20%" width="140%" height="140%"><feGaussianBlur stdDeviation="2"/></filter>
<filter id="b3" x="-30%" y="-30%" width="160%" height="160%"><feGaussianBlur stdDeviation="3.500"/></filter>
<filter id="b6" x="-30%" y="-30%" width="160%" height="160%"><feGaussianBlur stdDeviation="6"/></filter>
<filter id="b10" x="-40%" y="-40%" width="180%" height="180%"><feGaussianBlur stdDeviation="10"/></filter>
<filter id="b18" x="-50%" y="-50%" width="200%" height="200%"><feGaussianBlur stdDeviation="18"/></filter>
<linearGradient id="gHead" gradientUnits="userSpaceOnUse" x1="800" y1="668" x2="1262" y2="540">
<stop offset="0" stop-color="#cccccc"/><stop offset="0.050" stop-color="#dcdcdc"/><stop offset="0.170" stop-color="#e6e6e6"/><stop offset="0.320" stop-color="#dedede"/>
<stop offset="0.430" stop-color="#d3d3d3"/><stop offset="0.540" stop-color="#bcbcbc"/><stop offset="0.630" stop-color="#a2a2a2"/><stop offset="0.720" stop-color="#8d8d8d"/>
<stop offset="0.810" stop-color="#797979"/><stop offset="0.890" stop-color="#646464"/><stop offset="0.960" stop-color="#4c4c4c"/><stop offset="1" stop-color="#3e3e3e"/>
</linearGradient>
<linearGradient id="gNeck" gradientUnits="userSpaceOnUse" x1="915" y1="1000" x2="1210" y2="990">
<stop offset="0" stop-color="#bebebe"/><stop offset="0.050" stop-color="#d6d6d6"/><stop offset="0.200" stop-color="#dedede"/><stop offset="0.450" stop-color="#dbdbdb"/>
<stop offset="0.620" stop-color="#d2d2d2"/><stop offset="0.720" stop-color="#c4c4c4"/><stop offset="0.810" stop-color="#b4b4b4"/><stop offset="0.850" stop-color="#9a9a9a"/><stop offset="0.880" stop-color="#707070"/><stop offset="0.910" stop-color="#4a4a4a"/><stop offset="0.940" stop-color="#3e3e3e"/><stop offset="1" stop-color="#3a3a3a"/>
</linearGradient>
<path id="pHead" d="M809.500 604 C809 590 810.500 580 812 571 C814 558 816.500 547 819.500 536 C822.500 521 826 508 831 494.600 C836 480 842 466 849 453 C856 440 865 428 875.500 418 C885 409 896 401 908 394 C921 386.500 936 381 952 376.600 C966 372.500 981 369 996 367 C1010 365 1026 364 1040.600 364.300 C1056 364.500 1071 366 1085 369 C1100 372.500 1115 377 1129 384 C1145 391.500 1160 401 1173 412 C1186 423 1198 434.500 1208.600 447.400 C1217.500 458.500 1225.500 470 1232 482.800 C1238.500 496 1243.500 510 1247 524 C1250.500 538 1253 551.500 1254 565 C1255 580 1254.500 595 1253 609.500 C1252 622 1250.500 636 1248.500 648 L1246 700 L1222 785 L1190 793.400 C1189 805 1186 817 1182.600 826.600 C1180 833 1173 843 1166 850 C1150 864 1125 884 1100 902.700 C1083 912.500 1065 922 1047.700 931 C1039 936 1030 942 1021 947 C1012 951.500 1003 956 994.600 959.400 C986 962.500 977 965 968 966.400 C959 968 950 969 941.500 969 C932 969 923 967.500 915 964.700 C907.500 962 900.500 958.500 895.500 954 C890.500 950 887.500 945.500 885 940 C881.500 932.500 879 925 876 917 C871.500 904 866.500 891 862 878 C856 860.500 850 843 844 825 C838 808 832 792 826.500 775.400 C822.500 763.500 819 752 816 740 C814 730 812.500 715 813 698 C813.500 688 815 678 814.700 670.500 C814.300 660 811.500 648 810.800 636.400 C810 625 809.700 615 809.500 604 Z"/>
<path id="pNeck" d="M921.500 960 L918 1024 C920 1030 930 1042 943 1054 C952 1061.500 962 1068.500 972.800 1074 C982 1080 992 1085.500 1002 1089 C1012 1091.500 1024 1091.500 1034.700 1090.600 C1047 1088 1059 1084 1070 1080 C1085 1075 1100 1070.500 1114 1065.600 C1130 1060 1145 1054.500 1158.500 1048 C1168 1042 1176 1034 1182 1024 C1191 1010.500 1200 997 1208.600 983 C1209 977 1208.500 971 1207 965 C1204 955 1200.500 945.500 1197 936 C1193 921 1189.500 906.500 1186.500 891.600 C1185 870 1184.500 848.500 1186 826.800 L1194.500 797 L1100 850 Z"/>
<path id="pEar" d="M1232.400 655 C1238 651 1245 649 1250.800 649.700 C1256 649 1260 650 1263.700 651.600 C1269 655 1272.500 658.500 1274.800 662.600 C1278 668 1279.800 673.500 1280.300 679.200 C1281 686 1280.500 693 1279.400 699.500 C1278 708.500 1276 717 1273 725.300 C1270 733 1266 740.500 1261.900 747.400 C1258 754.500 1253.500 761 1249 767.600 C1244.500 774 1239.500 780.500 1234 786 C1229.500 790 1224.500 793.500 1219.500 795.300 C1215 796.800 1210.500 797.300 1206.600 797 C1202.500 796.500 1199 795.500 1195.500 794.400 L1190 793.400 L1198 760 L1215 700 Z"/>
<clipPath id="cHead"><use href="#pHead"/></clipPath>
<clipPath id="cNeck"><use href="#pNeck"/></clipPath>
<clipPath id="cEar"><use href="#pEar"/></clipPath>
</defs>
<!-- bounding box -->
<rect x="810" y="364.500" width="471" height="727" stroke="#a3a8ee" stroke-width="1.200"/>
<!-- NECK -->
<use href="#pNeck" fill="url(#gNeck)"/>
<g clip-path="url(#cNeck)">
<path d="M925 962 C960 975 1010 968 1060 940 L1160 880 L1175 890 L1090 950 C1040 975 960 980 925 975Z" fill="#b4b4b4" opacity="0.450" filter="url(#b6)"/>
<path d="M985 975 C992 1005 1005 1035 1020 1060" stroke="#cfcfcf" stroke-width="9" opacity="0.500" filter="url(#b6)"/>
<path d="M1075 960 C1085 990 1100 1020 1120 1050" stroke="#c8c8c8" stroke-width="10" opacity="0.450" filter="url(#b6)"/>
<path d="M940 1060 C980 1095 1060 1095 1170 1045 L1170 1100 L930 1100Z" fill="#f4f4f4" opacity="0.700" filter="url(#b6)"/>
</g>
<path d="M921.800 966 L918.600 1022" stroke="#111" stroke-width="1.500"/>
<path d="M1195 798 C1191 810 1188 818 1186.300 830 C1185 850 1185 870 1186.500 891.600 C1189.500 906.500 1193 921 1197 936 C1200.500 945.500 1204 955 1207 965" stroke="#222" stroke-width="1.300"/>
<!-- HEAD -->
<use href="#pHead" fill="url(#gHead)"/>
<g clip-path="url(#cHead)">
<!-- rim darkening -->
<path d="M812 571 C814 558 816.500 547 819.500 536 C822.500 521 826 508 831 494.600 C836 480 842 466 849 453 C856 440 865 428 875.500 418 C885 409 896 401 908 394 C921 386.500 936 381 952 376.600 C966 372.500 981 369 996 367 C1010 365 1026 364 1040.600 364.300 C1056 364.500 1071 366 1085 369 C1100 372.500 1115 377 1129 384" stroke="#8a8a8a" stroke-width="56" opacity="0.380" filter="url(#b18)"/>
<path d="M810 700 C808 660 808 620 812 571 C814 558 816.500 547 819.500 536" stroke="#9a9a9a" stroke-width="14" opacity="0.400" filter="url(#b6)"/>
<path d="M862 878 C866.500 891 871.500 904 876 917 C879 925 881.500 932.500 885 940 C887.500 945.500 890.500 950 895.500 954 C900.500 958.500 907.500 962 915 964.700 C923 967.500 932 969 941.500 969 C950 969 959 968 968 966.400 C977 965 986 962.500 994.600 959.400" stroke="#8c8c8c" stroke-width="18" opacity="0.400" filter="url(#b6)"/>
<path d="M816 740 C819 752 822.500 763.500 826.500 775.400 C832 792 838 808 844 825 C850 843 856 860.500 862 878" stroke="#9c9c9c" stroke-width="12" opacity="0.350" filter="url(#b6)"/>
<!-- forehead highlight -->
<ellipse cx="890" cy="560" rx="70" ry="95" fill="#ececec" opacity="0.400" filter="url(#b18)" transform="rotate(12 890 560)"/>
<!-- front face light plane (below brow) -->
<path d="M815 650 L830 700 L850 800 L880 920 L930 968 L985 960 L1005 900 L1012 840 L1035 780 L1075 720 L1090 690 L1040 650 L930 640Z" fill="#e3e3e3" opacity="0.850" filter="url(#b10)"/>
<!-- side plane darkening lower -->
<path d="M1102 655 L1088 720 L1066 790 L1044 850 L1026 910 L1012 955 L1100 905 L1170 850 L1195 790 L1240 700 L1252 640 L1180 630Z" fill="#6e6e6e" opacity="0.550" filter="url(#b6)"/>
<path d="M1150 560 L1125 700 L1100 820 L1085 915 L1170 850 L1195 790 L1250 650 L1256 560Z" fill="#5a5a5a" opacity="0.380" filter="url(#b18)"/>
<path d="M1120 760 L1080 900 L1166 850 L1192 790 L1215 740Z" fill="#606060" opacity="0.300" filter="url(#b10)"/>
<!-- cheekbone highlight near outer eye -->
<ellipse cx="1098" cy="700" rx="9" ry="34" fill="#c4c4c4" opacity="0.450" filter="url(#b10)" transform="rotate(22 1098 700)"/>
<!-- temple dark -->
<ellipse cx="1150" cy="640" rx="30" ry="60" fill="#606060" opacity="0.350" filter="url(#b18)"/>
<!-- jaw edge near chin shading -->
<path d="M1030 900 L1000 950 L1060 925 L1100 900 L1120 860Z" fill="#8a8a8a" opacity="0.350" filter="url(#b10)"/>
<!-- brow shadows -->
<path d="M816 612 C840 604 872 612 896 636 L904 668 L892 664 C884 652 872 646 851 643 C838 643 828 650 821 664Z" fill="#a2a2a2" opacity="0.700" filter="url(#b6)"/>
<path d="M934 618 C980 610 1045 622 1102 648 L1090 672 C1070 660 1050 650 1024 642 C1010 641 998 644 990 650 C980 658 974 670 970 684 L944 692 C934 672 930 640 934 618Z" fill="#8f8f8f" opacity="0.720" filter="url(#b6)"/>
<!-- nose side shadow band -->
<path d="M930 630 C927 650 924 668 922 683 C919 700 916 715 914.500 729 C912 742 910 752 908 762 L925 770 L968 778 L955 760 C945 752 939 748 938 740 C936 730 936 722 937 714 C938 704 939 694 940 683 C943 668 946 652 950 632Z" fill="#9e9e9e" opacity="0.780" filter="url(#b3)"/>
<path d="M944 640 C958 650 966 668 969 684 C960 698 948 702 936 698Z" fill="#9c9c9c" opacity="0.400" filter="url(#b6)"/>
<!-- nose underside -->
<path d="M906 758 C912 752 918 750 924 750.600 C938 754 950 760 959 768 C964 771 967 775 968 779 C969 784 968 789 966 793 C964 798 962 801 959 802 C954 803 949 803 945 802 C938 801 932 799 927.400 796.600 C922 800 918 805 913 807 C909 807 905 806 902.600 803.700 C900 800 899 796 899 793 C901 786 903 781 906 775.400Z" fill="#8e8e8e" opacity="0.750" filter="url(#b3)"/>
<path d="M900 796 C904 804 912 808 920 803 C926 798 934 800 942 802 C950 804 958 803 962 798 C950 796 935 790 925 792 C915 794 908 794 900 796Z" fill="#666666" opacity="0.700" filter="url(#b2)"/>
<ellipse cx="950" cy="782" rx="10" ry="9" fill="#9a9a9a" opacity="0.600" filter="url(#b3)"/>
<!-- nose ridge highlight -->
<path d="M918 638 C913 675 903 725 888 772" stroke="#f2f2f2" stroke-width="10" opacity="0.750" filter="url(#b3)" stroke-linecap="round"/>
<ellipse cx="886" cy="780" rx="7" ry="12" fill="#f6f6f6" opacity="0.700" filter="url(#b3)" transform="rotate(15 886 780)"/>
<!-- nose left shadow against cheek -->
<path d="M903 690 C897 720 889 745 881 766" stroke="#b8b8b8" stroke-width="4" opacity="0.800" filter="url(#b2)"/>
<!-- nose tip outline -->
<path d="M884 757 C879 768 875 778 876 786 C879 794 885 800 892 803" stroke="#1c1c1c" stroke-width="1.300" stroke-dasharray="9 3 14 4 30" opacity="0.900"/>
<path d="M914 800 C918 797.500 924 797 928 799" stroke="#1c1c1c" stroke-width="1.300"/>
<!-- eye sockets -->
<path d="M822 664 C828 650 840 643 851 642.600 C862 642.500 876 647 888 659 C894 666 898 673 900 680 C894 692 880 700 866 702 C850 704 835 696 828 684Z" fill="#dadada" opacity="0.950" filter="url(#b1)"/>
<path d="M971 683.600 C975 668 985 652 998 644 C1010 641 1030 641 1055 652 C1068 657 1080 665 1088 670.500 C1078 684 1060 696 1040 702 C1020 706 995 700 980 690Z" fill="#d4d4d4" opacity="0.950" filter="url(#b1)"/>
<!-- left eye -->
<defs><linearGradient id="gEye" x1="0" y1="0" x2="0" y2="1"><stop offset="0" stop-color="#d4d4d4"/><stop offset="0.350" stop-color="#e6e6e6"/><stop offset="1" stop-color="#ececec"/></linearGradient>
<linearGradient id="gEye2" x1="0" y1="0" x2="1" y2="0.300"><stop offset="0" stop-color="#e8e8e8"/><stop offset="0.600" stop-color="#e2e2e2"/><stop offset="1" stop-color="#c8c8c8"/></linearGradient></defs>
<path d="M824 670.500 C828 665 833 662 837 661 C845 657.500 852 657 858.800 657 C868 658 876 662 880.500 665.800 C888 672 893 678 896 683 C893 687 890 690 886.600 692 C880 697 873 699.500 866.500 700.600 C861 701.500 856 701.600 851 701.400 C845 700 840 697 835.600 693.700 C831 690 828 685 826 679.700Z" fill="url(#gEye)"/>
<path d="M824 670.500 C828 665 833 662 837 661 C845 657.500 852 657 858.800 657 C868 658 876 662 880.500 665.800 C888 672 893 678 896 683" stroke="#b2b2b2" stroke-width="1.600" opacity="0.800" filter="url(#b1)"/>
<path d="M826 679.700 C828 685 831 690 835.600 693.700 C840 697 845 700 851 701.400 C856 701.600 861 701.500 866.500 700.600 C873 699.500 880 697 886.600 692 C890 690 893 687 896 683" stroke="#9c9c9c" stroke-width="1" opacity="0.850"/>
<path d="M822.400 664.300 C826 655 829 651 831 648.800 C838 644 845 643 851 642.600 C860 643 868 644.500 874 647 C881 651 887 656 891 662.700 C895 668 898 674 899.800 679.700" stroke="#b4b4b4" stroke-width="1.800" opacity="0.900" filter="url(#b1)"/>
<path d="M824 667 C829 658 834 653 838 651.500 C846 648.500 853 648 859 648.500 C868 650 876 653 882 658 C888 663 893 670 896.500 677" stroke="#f4f4f4" stroke-width="2.500" opacity="0.800" filter="url(#b1)"/>
<path d="M897 676 C898.500 680 899 684 898 688" stroke="#222" stroke-width="1.200" opacity="0.800"/>
<!-- right eye -->
<path d="M978 676.600 C982 670 987 664 993.400 659.600 C1002 656 1011 655 1019.700 655 C1029 655.500 1039 657 1047.600 659.600 C1057 663 1067 667.500 1075.400 672 L1083 674 C1077 680 1070 685 1063 689 C1055 694 1048 698.500 1039.800 701.400 C1032 703.500 1024 704.500 1016.600 704.500 C1008 703.500 1000 701.500 993.400 698.300 C987 695 982 691.500 978 687.500 C976 684 976 680 978 676.600Z" fill="url(#gEye2)"/>
<path d="M978 676.600 C982 670 987 664 993.400 659.600 C1002 656 1011 655 1019.700 655 C1029 655.500 1039 657 1047.600 659.600 C1057 663 1067 667.500 1075.400 672 L1083 674" stroke="#acacac" stroke-width="1.800" opacity="0.800" filter="url(#b1)"/>
<path d="M978 687.500 C982 691.500 987 695 993.400 698.300 C1000 701.500 1008 703.500 1016.600 704.500 C1024 704.500 1032 703.500 1039.800 701.400 C1048 698.500 1055 694 1063 689 C1070 685 1077 680 1083 674" stroke="#989898" stroke-width="1" opacity="0.850"/>
<path d="M971 683.600 C975 672 978 664 981 658 C986 651 992 646.500 998 644 C1006 642 1015 641.500 1024 641.800 C1035 643.500 1045 647.500 1055 652 C1063 655.500 1071 659.500 1078.500 664 L1088 670.500" stroke="#a8a8a8" stroke-width="1.800" opacity="0.900" filter="url(#b1)"/>
<path d="M974 681 C978 670 982 662 987 656 C993 651 1000 648.500 1008 648 C1020 647.500 1032 650 1044 654 C1056 658.500 1068 664 1080 670" stroke="#f0f0f0" stroke-width="2.600" opacity="0.750" filter="url(#b1)"/>
<path d="M1044 690 C1055 686 1066 680 1076 672" stroke="#c4c4c4" stroke-width="6" opacity="0.600" filter="url(#b3)"/>
<path d="M971 684 C974 680 977 677 980 676" stroke="#9a9a9a" stroke-width="1.200" opacity="0.800"/>
<!-- under-eye soft shadows -->
<path d="M830 700 C845 712 870 712 890 700" stroke="#cdcdcd" stroke-width="5" opacity="0.700" filter="url(#b3)"/>
<path d="M985 706 C1010 716 1040 714 1070 696" stroke="#c6c6c6" stroke-width="5" opacity="0.600" filter="url(#b3)"/>
<!-- mouth -->
<path d="M880 842 C900 836 930 838 945 846 C960 848 990 850 1005 852 L1000 860 C970 862 940 864 917 862 C900 860 880 856 868 850Z" fill="#bdbdbd" opacity="0.750" filter="url(#b3)"/>
<path d="M865.500 848 C874 851 883 853.500 892 855 C900 857 908 859.500 916.800 860.300 C923 860 929 859 934.400 858.500 C948 858.500 963 858.800 977 858.500 C987 858 997 857 1007 855" stroke="#8c8c8c" stroke-width="1.300"/>
<path d="M905 858 C912 861.500 920 862 930 859.500" stroke="#787878" stroke-width="1.600" filter="url(#b1)"/>
<path d="M886.700 874.400 C893 880 899 883 906 885 C913 887 920 887.700 927.400 887.700 C935 887 943 886 950.400 884 C957 882 963 879.500 968 876" stroke="#a6a6a6" stroke-width="3.500" opacity="0.900" filter="url(#b2)"/>
<path d="M1008 852 C1012 858 1014 863 1016 868" stroke="#c0c0c0" stroke-width="3" opacity="0.800" filter="url(#b2)"/>
<!-- philtrum highlight -->
<ellipse cx="912" cy="832" rx="8" ry="14" fill="#f2f2f2" opacity="0.600" filter="url(#b6)"/>
<!-- chin highlight -->
<ellipse cx="925" cy="925" rx="30" ry="25" fill="#f0f0f0" opacity="0.500" filter="url(#b10)"/>
</g>
<!-- head outline -->
<path d="M813 698 C813.500 688 815 678 814.700 670.500 C814.300 660 811.500 648 810.800 636.400 C810 625 809.700 615 809.500 604 C809 590 810.500 580 812 571 C814 558 816.500 547 819.500 536 C822.500 521 826 508 831 494.600 C836 480 842 466 849 453 C856 440 865 428 875.500 418 C885 409 896 401 908 394 C921 386.500 936 381 952 376.600 C966 372.500 981 369 996 367 C1010 365 1026 364 1040.600 364.300 C1056 364.500 1071 366 1085 369 C1100 372.500 1115 377 1129 384 C1145 391.500 1160 401 1173 412 C1186 423 1198 434.500 1208.600 447.400 C1217.500 458.500 1225.500 470 1232 482.800 C1238.500 496 1243.500 510 1247 524 C1250.500 538 1253 551.500 1254 565 C1255 580 1254.500 595 1253 609.500 C1252 622 1250.500 636 1248.500 648" stroke="#141414" stroke-width="1.700"/>
<path d="M1190 793.400 C1189 805 1186 817 1182.600 826.600 C1180 833 1173 843 1166 850 C1150 864 1125 884 1100 902.700 C1083 912.500 1065 922 1047.700 931 C1039 936 1030 942 1021 947 C1012 951.500 1003 956 994.600 959.400 C986 962.500 977 965 968 966.400 C959 968 950 969 941.500 969 C932 969 923 967.500 915 964.700 C907.500 962 900.500 958.500 895.500 954 C890.500 950 887.500 945.500 885 940 C881.500 932.500 879 925 876 917 C871.500 904 866.500 891 862 878 C856 860.500 850 843 844 825 C838 808 832 792 826.500 775.400 C822.500 763.500 819 752 816 740 C814 730 812.500 715 813 698" stroke="#141414" stroke-width="1.700"/>
<!-- EAR -->
<use href="#pEar" fill="#b2b2b2"/>
<g clip-path="url(#cEar)">
<path d="M1215 700 L1198 760 L1190 793 L1222 795 L1236 750 L1228 700Z" fill="#7a7a7a" opacity="0.850" filter="url(#b3)"/>
<path d="M1228 668 C1240 656 1258 654 1268 664 C1276 674 1278 692 1274 710" stroke="#d4d4d4" stroke-width="6" opacity="0.950" filter="url(#b2)"/>
<path d="M1240 676 C1250 668 1260 672 1264 684 C1267 700 1262 718 1254 732 C1248 726 1243 716 1240 704 C1238 694 1238 684 1240 676Z" fill="#6c6c6c" opacity="0.850" filter="url(#b2)"/>
<path d="M1233 690 C1236 678 1242 670 1248 668" stroke="#d8d8d8" stroke-width="3.500" opacity="0.850" filter="url(#b1)"/>
<path d="M1228 722 C1240 716 1250 713 1256 708 C1252 724 1246 736 1240 744 C1234 750 1228 754 1222 756Z" fill="#cacaca" opacity="0.950" filter="url(#b2)"/>
<path d="M1224 720 C1232 713 1244 711 1254 712" stroke="#5e5e5e" stroke-width="3" opacity="0.850" filter="url(#b1)"/>
<path d="M1250 700 C1256 706 1258 714 1254 722" stroke="#4e4e4e" stroke-width="2.500" opacity="0.700" filter="url(#b1)"/>
<path d="M1212 682 C1214 672 1220 664 1228 662" stroke="#cdcdcd" stroke-width="4" opacity="0.800" filter="url(#b2)"/>
<path d="M1270 700 C1266 730 1247 765 1224 790" stroke="#858585" stroke-width="4" opacity="0.700" filter="url(#b2)"/>
<path d="M1276 690 C1272 725 1255 760 1232 786" stroke="#c4c4c4" stroke-width="2.500" opacity="0.800" filter="url(#b1)"/>
</g>
<path d="M1222 724 C1224 730 1226 734 1225 740 C1222 748 1216 754 1213 760 C1211 764 1210 768 1209 771" stroke="#1c1c1c" stroke-width="1.300"/>
<path d="M1232.400 655 C1238 651 1245 649 1250.800 649.700 C1256 649 1260 650 1263.700 651.600 C1269 655 1272.500 658.500 1274.800 662.600 C1278 668 1279.800 673.500 1280.300 679.200 C1281 686 1280.500 693 1279.400 699.500 C1278 708.500 1276 717 1273 725.300 C1270 733 1266 740.500 1261.900 747.400 C1258 754.500 1253.500 761 1249 767.600 C1244.500 774 1239.500 780.500 1234 786 C1229.500 790 1224.500 793.500 1219.500 795.300 C1215 796.800 1210.500 797.300 1206.600 797 C1202.500 796.500 1199 795.500 1195.500 794.400 L1190 793.400" stroke="#141414" stroke-width="1.600"/>
</svg>
<svg class="abs" style="left:805px;top:312px" width="400" height="50" viewBox="805 312 400 50" fill="none">
<path d="M834 321 C826 321.500 819 326 816.500 335 L813.500 335.500 L820 343.500 L826 334 L823 334.500 C825 328 829 325.500 834.500 325 Z" fill="#86bde4"/>
<path d="M813.500 341 C812 350 820 356 830 355.500 L835 356 L843.500 348.500 L833.500 347 L834 350 C826 351 819 349 816.500 342Z" fill="#86bde4"/>
<path d="M828.0 329.5 L835.4 336.2 L828.0 343.0 Z M834.5 330.0 H843.5 V342.5 H834.5 Z" fill="#4f9fd9"/>
<path d="M862.0 331.5 L868.5 338.0 L862.0 344.5 Z M867.7 332.0 H875.5 V344.0 H867.7 Z" fill="#4f9fd9"/>
<path d="M871.8 330.0 L871.8 326.0 L875.5 326.0 L869.5 320.0 L863.5 326.0 L867.2 326.0 L867.2 330.0Z" fill="#86bde4"/>
<path d="M867.2 347.0 L867.2 351.0 L863.5 351.0 L869.5 357.0 L875.5 351.0 L871.8 351.0 L871.8 347.0Z" fill="#86bde4"/>
<path d="M860.0 335.8 L857.0 335.8 L857.0 332.5 L851.0 338.0 L857.0 343.5 L857.0 340.2 L860.0 340.2Z" fill="#86bde4"/>
<path d="M878.0 340.2 L882.0 340.2 L882.0 343.5 L888.0 338.0 L882.0 332.5 L882.0 335.8 L878.0 335.8Z" fill="#86bde4"/>
<path d="M900.500 322.500 L907 331 L904 331 L908 339.500 L900.500 353.500 L893 339.500 L897 331 L894 331Z" fill="#86bde4"/>
<path d="M909.0 329.5 L916.7 336.2 L909.0 343.0 Z M915.7 330.0 H925.0 V342.5 H915.7 Z" fill="#4f9fd9"/>
<path d="M956.0 328.0 L956.0 327.0 L959.8 327.0 L954.5 322.0 L949.2 327.0 L953.0 327.0 L953.0 328.0Z" fill="#86bde4"/>
<path d="M953.0 349.0 L953.0 350.0 L949.2 350.0 L954.5 355.0 L959.8 350.0 L956.0 350.0 L956.0 349.0Z" fill="#86bde4"/>
<path d="M945.0 337.0 L943.5 337.0 L943.5 333.2 L938.0 338.5 L943.5 343.8 L943.5 340.0 L945.0 340.0Z" fill="#86bde4"/>
<path d="M964.0 340.0 L965.5 340.0 L965.5 343.8 L971.0 338.5 L965.5 333.2 L965.5 337.0 L964.0 337.0Z" fill="#86bde4"/>
<path d="M954.5 329.0 L962.8 333.8 L962.8 343.2 L954.5 348.0 L946.2 343.2 L946.2 333.8Z M946.2 333.8 L954.5 338.5 L962.8 333.8 M954.5 338.5 L954.5 348.0" stroke="#4f9fd9" stroke-width="1.5" stroke-linejoin="round" fill="#fff"/>
<path d="M997 321 C988 322 984 330 984 336 L980 336 L987 345 L992 336 L989.500 336 C989.500 330 993 326 998 325.500Z" fill="#86bde4"/>
<path d="M996 321.500 C999 321 1001 322 1002 323.500 L1003.500 322.500 L1003.500 326.500 L999 326 L1000.500 325 C999.500 324 998 324 996.500 324.500Z" fill="#86bde4"/>
<path d="M998.0 329.5 L1006.7 334.5 L1006.7 344.5 L998.0 349.5 L989.3 344.5 L989.3 334.5Z M989.3 334.5 L998.0 339.5 L1006.7 334.5 M998.0 339.5 L998.0 349.5" stroke="#4f9fd9" stroke-width="1.5" stroke-linejoin="round" fill="#fff"/>
<path d="M983.500 342 C982 350 990 354.500 1000 353.500 L1000 356 L1008 350 L1000 345.500 L1000 348.500 C993 349.500 987 348 986 343Z" fill="#86bde4"/>
<path d="M1019 335 L1018.500 328 L1021.500 329.500 C1028 319.500 1042 319.500 1047.500 329.500 L1050 328 L1049.500 335 L1042.500 332.500 L1045 331.500 C1040 324 1029 324 1024 331.500 L1026.500 332.500Z" fill="#86bde4"/>
<path d="M1034.4 331.0 L1044.4 336.8 L1044.4 348.2 L1034.4 354.0 L1024.4 348.2 L1024.4 336.8Z M1024.4 336.8 L1034.4 342.5 L1044.4 336.8 M1034.4 342.5 L1034.4 354.0" stroke="#4f9fd9" stroke-width="1.6" stroke-linejoin="round" fill="#fff"/>
<path d="M1058.500 346 L1074.500 337 L1090.500 346 L1074.500 355.500Z" stroke="#4f9fd9" stroke-width="1.300" fill="none"/>
<path d="M1062.500 339.500 C1062 331 1068 326.500 1076 326" stroke="#86bde4" stroke-width="3.600" fill="none"/><path d="M1075 320.500 L1082.500 326 L1075 331.500Z" fill="#86bde4"/><path d="M1062.500 339 C1063 346 1070 349.500 1076 349 C1082 348.500 1086 345 1087 340" stroke="#86bde4" stroke-width="3.600" fill="none"/><path d="M1082.800 340.500 L1087.500 332 L1091.800 340.500Z" fill="#86bde4"/>
<path d="M1074.6 332.5 L1081.6 336.0 L1081.6 343.0 L1074.6 346.5 L1067.6 343.0 L1067.6 336.0Z M1067.6 336.0 L1074.6 339.5 L1081.6 336.0 M1074.6 339.5 L1074.6 346.5" stroke="#4f9fd9" stroke-width="1.5" stroke-linejoin="round" fill="#fff"/>
<path d="M1098.500 346 L1114.700 337 L1131 346 L1114.700 355.500Z" stroke="#4f9fd9" stroke-width="1.300" fill="none"/>
<path d="M1115.6 328.1 L1108.0 323.0 L1109.4 320.8 L1102.5 321.3 L1104.7 327.9 L1106.1 325.8 L1113.8 330.9Z" fill="#86bde4"/>
<path d="M1115.6 330.9 L1123.4 325.8 L1124.8 327.9 L1127.0 321.3 L1120.1 320.8 L1121.5 322.9 L1113.8 328.1Z" fill="#86bde4"/>
<path d="M1114.2 327.9 L1103.2 331.6 L1102.3 329.2 L1098.5 335.0 L1105.1 337.3 L1104.3 334.8 L1115.2 331.1Z" fill="#86bde4"/>
<path d="M1114.2 331.1 L1125.2 334.9 L1124.4 337.3 L1131.0 335.0 L1127.1 329.2 L1126.3 331.6 L1115.2 327.9Z" fill="#86bde4"/>
<path d="M1114.7 333.2 L1122.1 337.4 L1122.1 345.9 L1114.7 350.2 L1107.3 345.9 L1107.3 337.4Z M1107.3 337.4 L1114.7 341.7 L1122.1 337.4 M1114.7 341.7 L1114.7 350.2" stroke="#4f9fd9" stroke-width="1.5" stroke-linejoin="round" fill="#fff"/>
<g transform="translate(2,-2.700) rotate(40 1168 336)"><path d="M1158 350 V334 A10 10 0 0 1 1178 334 V350 H1172.500 V334 A4.500 4.500 0 0 0 1163.500 334 V350Z" stroke="#4f9fd9" stroke-width="1.400" fill="#fff"/><rect x="1158" y="345.500" width="5.500" height="4.500" fill="#4f9fd9"/><rect x="1172.500" y="345.500" width="5.500" height="4.500" fill="#4f9fd9"/></g>
</svg>

</body></html>
